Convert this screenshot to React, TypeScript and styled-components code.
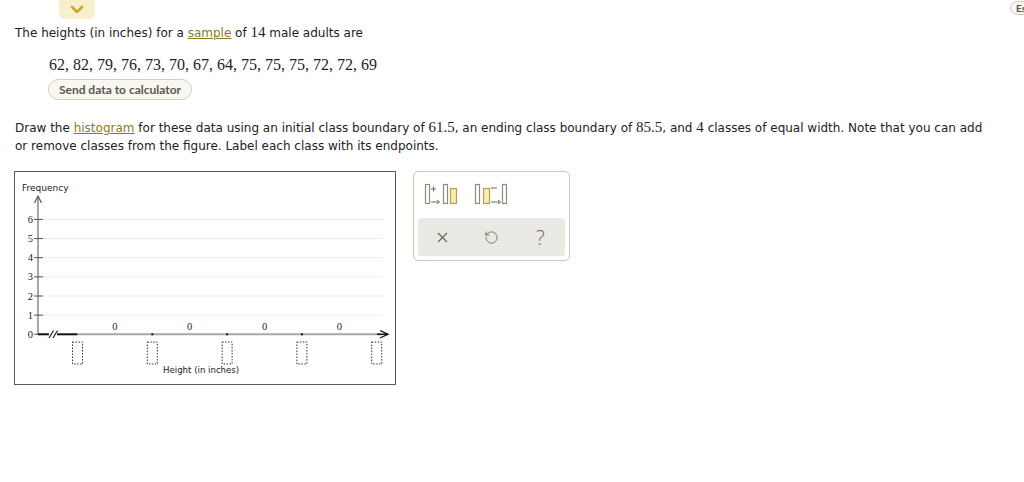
import React from 'react';
import styled, { createGlobalStyle } from 'styled-components';
import { RotateCcw } from 'lucide-react';

const GlobalStyle = createGlobalStyle`
  html, body {
    margin: 0;
    padding: 0;
    background: #fff;
  }
  body {
    width: 1024px;
    height: 482px;
    overflow: hidden;
    font-family: "DejaVu Sans", Verdana, sans-serif;
    color: #222;
  }
`;

const TopBar = styled.div`
  display: flex;
  justify-content: space-between;
  align-items: flex-start;
  height: 19px;
`;

const CollapseTab = styled.div`
  margin-left: 59px;
  width: 36px;
  height: 19px;
  background: #f6f0cd;
  border-radius: 0 0 6px 6px;
  display: flex;
  align-items: center;
  justify-content: center;
`;

const LangButton = styled.div`
  margin-top: 1px;
  margin-right: -16px;
  width: 30px;
  height: 14px;
  box-sizing: border-box;
  border: 1px solid #d2cdbd;
  border-radius: 8px;
  background: #f7f5ef;
  font-family: Lato, "Open Sans", sans-serif;
  font-size: 10px;
  font-weight: bold;
  color: #555044;
  line-height: 12px;
  padding-left: 5px;
  white-space: nowrap;
`;

const Content = styled.div`
  padding-left: 15px;
`;

const Question = styled.p`
  margin: 6px 0 0;
  font-size: 12px;
  line-height: 16px;
`;

const Link = styled.span`
  color: #8c7b1d;
  text-decoration: underline;
`;

const Num = styled.span`
  font-family: "Liberation Serif", "Times New Roman", serif;
  font-size: 15px;
  line-height: 1;
`;

const DataLine = styled.div`
  margin: 16px 0 0 34px;
  font-family: "Liberation Serif", "Times New Roman", serif;
  font-size: 16px;
  line-height: 16px;
`;

const SendButton = styled.div`
  margin: 6px 0 0 33px;
  width: 144px;
  height: 21px;
  box-sizing: border-box;
  border: 1px solid #d3cdbb;
  border-radius: 11px;
  background: #f8f7f2;
  font-family: Lato, "Open Sans", sans-serif;
  font-size: 12px;
  font-weight: bold;
  color: #5c5848;
  line-height: 19px;
  text-align: center;
  white-space: nowrap;
`;

const Instructions = styled.p`
  margin: 19px 0 0;
  width: 982px;
  font-size: 12px;
  line-height: 18px;
`;

const Workspace = styled.div`
  display: flex;
  align-items: flex-start;
  gap: 17px;
  margin: 16px 0 0 -1px;
`;

const ChartBox = styled.div`
  width: 382px;
  height: 214px;
  box-sizing: border-box;
  border: 1px solid #5a5a5a;

  & svg {
    display: block;
  }
`;

const ToolPanel = styled.div`
  width: 157px;
  height: 90px;
  box-sizing: border-box;
  border: 1px solid #cdc8b8;
  border-radius: 5px;
  padding: 4px;
  display: flex;
  flex-direction: column;
`;

const IconRow = styled.div`
  height: 42px;
  box-sizing: border-box;
  padding: 7px 0 0 6px;
  display: flex;
  gap: 16px;

  & svg {
    display: block;
  }
`;

const ActionBar = styled.div`
  height: 38px;
  background: #ebe9e3;
  border-radius: 3px;
  display: grid;
  grid-template-columns: repeat(3, 1fr);
  align-items: center;
  justify-items: center;
  color: #6a6757;
`;

const HelpMark = styled.span`
  font-family: "Open Sans", sans-serif;
  font-size: 20px;
  font-weight: 300;
  line-height: 1;
  margin-top: 1px;
`;

const serif = '"Liberation Serif", "Times New Roman", serif';
const sans = '"DejaVu Sans", Verdana, sans-serif';

const yOf = (k: number) => 162.3 - 19.15 * k;
const bounds = [0, 1, 2, 3, 4].map((i) => 62.5 + 74.8 * i);

const Histogram = () => (
  <svg width="380" height="212" viewBox="0 0 380 212">
    <text x="7" y="18.5" fontFamily={sans} fontSize="9" fill="#222">Frequency</text>
    {[1, 2, 3, 4, 5, 6].map((k) => (
      <line key={`g${k}`} x1="23" x2="368" y1={yOf(k)} y2={yOf(k)} stroke="#ececec" strokeWidth="1" />
    ))}
    <line x1="23" x2="23" y1="25" y2={yOf(0)} stroke="#8a8a8a" strokeWidth="1.5" />
    <polyline points="19.5,31 23,24 26.5,31" fill="none" stroke="#555" strokeWidth="1.2" />
    {[0, 1, 2, 3, 4, 5, 6].map((k) => (
      <g key={`t${k}`}>
        <line x1="19" x2="28" y1={yOf(k)} y2={yOf(k)} stroke="#555" strokeWidth="1" />
        <text x="18" y={yOf(k) + 3.5} textAnchor="end" fontFamily={serif} fontSize="10.5" fill="#222">{k}</text>
      </g>
    ))}
    <line x1={bounds[0]} x2="366" y1={yOf(0)} y2={yOf(0)} stroke="#a8a8a8" strokeWidth="2" />
    <line x1="23" x2="34" y1={yOf(0)} y2={yOf(0)} stroke="#111" strokeWidth="2" />
    <line x1="42" x2={bounds[0]} y1={yOf(0)} y2={yOf(0)} stroke="#111" strokeWidth="2" />
    <line x1="34" x2="38.5" y1="166" y2="158.5" stroke="#111" strokeWidth="1.1" />
    <line x1="38" x2="42.5" y1="166" y2="158.5" stroke="#111" strokeWidth="1.1" />
    <line x1="362" x2="373" y1={yOf(0)} y2={yOf(0)} stroke="#111" strokeWidth="1.5" />
    <polyline points="365,158.5 373,162.3 365,166" fill="none" stroke="#111" strokeWidth="1.3" />
    {bounds.slice(1, 4).map((x) => (
      <rect key={`d${x}`} x={x - 1} y={yOf(0) - 1} width="2" height="2" fill="#111" />
    ))}
    {bounds.slice(0, 4).map((x, i) => (
      <text key={`z${i}`} x={(x + bounds[i + 1]) / 2} y="158" textAnchor="middle" fontFamily={serif} fontSize="10.5" fill="#222">0</text>
    ))}
    {bounds.map((x) => (
      <rect key={`b${x}`} x={x - 5} y="170" width="10" height="22" fill="none" stroke="#333" strokeWidth="1" strokeDasharray="1.5 1.5" />
    ))}
    <text x="148" y="201" fontFamily={sans} fontSize="8.6" fill="#222">Height (in inches)</text>
  </svg>
);

const AddClassIcon = () => (
  <svg width="34" height="22" viewBox="0 0 34 22">
    <rect x="1.5" y="1.5" width="4" height="19" fill="#fff" stroke="#8f8c7c" strokeWidth="1.2" />
    <line x1="7" x2="12" y1="6" y2="6" stroke="#6f6c5c" strokeWidth="1" />
    <line x1="9.5" x2="9.5" y1="3.5" y2="8.5" stroke="#6f6c5c" strokeWidth="1" />
    <line x1="7" x2="15" y1="19" y2="19" stroke="#6f6c5c" strokeWidth="1" />
    <polyline points="13,17 15.5,19 13,21" fill="none" stroke="#6f6c5c" strokeWidth="1" />
    <rect x="19.5" y="1.5" width="4" height="19" fill="#fff" stroke="#8f8c7c" strokeWidth="1.2" />
    <rect x="26.5" y="5.5" width="6" height="15" fill="#f6ecb8" stroke="#b9a23c" strokeWidth="1.2" />
  </svg>
);

const RemoveClassIcon = () => (
  <svg width="34" height="22" viewBox="0 0 34 22">
    <rect x="1.5" y="1.5" width="4" height="19" fill="#fff" stroke="#8f8c7c" strokeWidth="1.2" />
    <rect x="9.5" y="5.5" width="6" height="15" fill="#f6ecb8" stroke="#b9a23c" strokeWidth="1.2" />
    <line x1="17" x2="23" y1="5" y2="5" stroke="#6f6c5c" strokeWidth="1" />
    <line x1="17" x2="26" y1="19" y2="19" stroke="#6f6c5c" strokeWidth="1" />
    <polyline points="24,17 26.5,19 24,21" fill="none" stroke="#6f6c5c" strokeWidth="1" />
    <rect x="28.5" y="1.5" width="4" height="19" fill="#fff" stroke="#8f8c7c" strokeWidth="1.2" />
  </svg>
);

const CloseIcon = () => (
  <svg width="11" height="11" viewBox="0 0 11 11">
    <line x1="1" y1="1" x2="10" y2="10" stroke="currentColor" strokeWidth="1.2" />
    <line x1="10" y1="1" x2="1" y2="10" stroke="currentColor" strokeWidth="1.2" />
  </svg>
);

const App = () => (
  <>
    <GlobalStyle />
    <TopBar>
      <CollapseTab>
        <svg width="14" height="9" viewBox="0 0 14 9">
          <polyline points="2,2 7,7 12,2" fill="none" stroke="#c9a82a" strokeWidth="2.6" strokeLinecap="round" strokeLinejoin="round" />
        </svg>
      </CollapseTab>
      <LangButton>Es</LangButton>
    </TopBar>
    <Content>
      <Question>
        The heights (in inches) for a <Link>sample</Link> of <Num>14</Num> male adults are
      </Question>
      <DataLine>62, 82, 79, 76, 73, 70, 67, 64, 75, 75, 75, 72, 72, 69</DataLine>
      <SendButton>Send data to calculator</SendButton>
      <Instructions>
        Draw the <Link>histogram</Link> for these data using an initial class boundary of <Num>61.5</Num>, an ending class
        boundary of <Num>85.5</Num>, and <Num>4</Num> classes of equal width. Note that you can add or remove classes
        from the figure. Label each class with its endpoints.
      </Instructions>
      <Workspace>
        <ChartBox>
          <Histogram />
        </ChartBox>
        <ToolPanel>
          <IconRow>
            <AddClassIcon />
            <RemoveClassIcon />
          </IconRow>
          <ActionBar>
            <CloseIcon />
            <RotateCcw size={15} strokeWidth={1.4} />
            <HelpMark>?</HelpMark>
          </ActionBar>
        </ToolPanel>
      </Workspace>
    </Content>
  </>
);

export default App;
